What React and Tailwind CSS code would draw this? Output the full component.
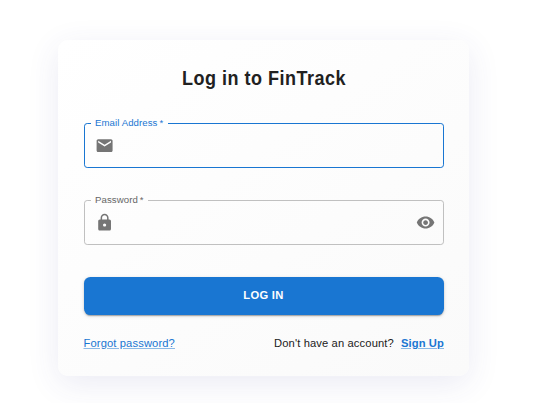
function Icon({ d, className }) {
  return (
    <svg viewBox="0 0 24 24" className={`size-[19.2px] shrink-0 fill-[#757575] ${className ?? ''}`} aria-hidden="true">
      <path d={d} />
    </svg>
  );
}

const MAIL = 'M20 4H4c-1.1 0-1.99.9-1.99 2L2 18c0 1.100.9 2 2 2h16c1.100 0 2-.9 2-2V6c0-1.100-.9-2-2-2m0 4-8 5-8-5V6l8 5 8-5z';
const LOCK = 'M18 8h-1V6c0-2.760-2.240-5-5-5S7 3.240 7 6v2H6c-1.100 0-2 .9-2 2v10c0 1.100.9 2 2 2h12c1.100 0 2-.9 2-2V10c0-1.100-.9-2-2-2m-6 9c-1.100 0-2-.9-2-2s.9-2 2-2 2 .9 2 2-.9 2-2 2m3.100-9H8.900V6c0-1.710 1.390-3.100 3.100-3.100s3.100 1.390 3.100 3.100z';
const EYE = 'M12 4.500C7 4.500 2.730 7.610 1 12c1.730 4.390 6 7.500 11 7.500s9.270-3.110 11-7.500c-1.730-4.390-6-7.500-11-7.500M12 17c-2.760 0-5-2.240-5-5s2.240-5 5-5 5 2.240 5 5-2.240 5-5 5m0-8c-1.660 0-3 1.340-3 3s1.340 3 3 3 3-1.340 3-3-1.340-3-3-3';

function Field({ label, icon, type, active, legendWidth, end }) {
  return (
    <fieldset
      className={`h-[49px] w-full rounded-[3.2px] border px-[6px] ${active ? 'border-[#1976d2] text-[#1976d2]' : 'border-[#c0c0c0] text-[#666666]'}`}
    >
      <legend className={`h-[9px] whitespace-nowrap pl-[4px] text-[9.6px] leading-[7px] tracking-[0.09px] ${legendWidth}`}>
        {label}<span className="ml-[2px]">*</span>
      </legend>
      <div className="flex h-[35px] items-center pl-[4px] pr-[2px]">
        <Icon d={icon} />
        <input type={type} aria-label={label} className="min-w-0 flex-1 bg-transparent px-2 text-[13px] text-[#212121] outline-none" />
        {end && <Icon d={end} />}
      </div>
    </fieldset>
  );
}

export default function App() {
  return (
    <main className="flex h-[403px] w-[533px] justify-center overflow-hidden bg-white pr-[6px] pt-[40px] font-['Liberation_Sans',Arial,sans-serif]">
      <form className="flex h-[336px] w-[411px] flex-col rounded-[10px] bg-linear-145 from-white to-[#fafafa] pl-[26px] pr-[25px] shadow-[0_8px_32px_rgba(60,60,150,0.1)]">
        <h1 className="mt-[25px] h-[26px] scale-x-[0.9] text-center text-[20px] font-bold leading-[26px] tracking-[0.55px] text-[#212121]">
          Log in to FinTrack
        </h1>
        <div className="mt-[28px] flex flex-col gap-[28px]">
          <Field label="Email Address" icon={MAIL} type="email" active legendWidth="w-[77px]" />
          <Field label="Password" icon={LOCK} type="password" legendWidth="w-[57px]" end={EYE} />
        </div>
        <button
          type="button"
          className="mt-[32px] h-[38px] w-full rounded-[6.4px] bg-[#1976d2] pb-[2px] pr-[1px] text-[11.2px] font-bold leading-[36px] tracking-[0.3px] text-white shadow-[0_2px_1px_-1px_rgba(0,0,0,0.2),0_1px_2px_rgba(0,0,0,0.14),0_1px_4px_rgba(0,0,0,0.12)]"
        >
          LOG IN
        </button>
        <div className="mt-[20px] flex items-center justify-between text-[11.2px] leading-[16px] tracking-[0.12px] text-[#212121]">
          <a href="#forgot" className="-ml-[0.5px] text-[#1976d2] underline decoration-[#1976d2]/50">Forgot password?</a>
          <p>
            Don't have an account?
            <a href="#signup" className="ml-[7px] font-bold text-[#1976d2] underline decoration-[#1976d2]/50">Sign Up</a>
          </p>
        </div>
      </form>
    </main>
  );
}
